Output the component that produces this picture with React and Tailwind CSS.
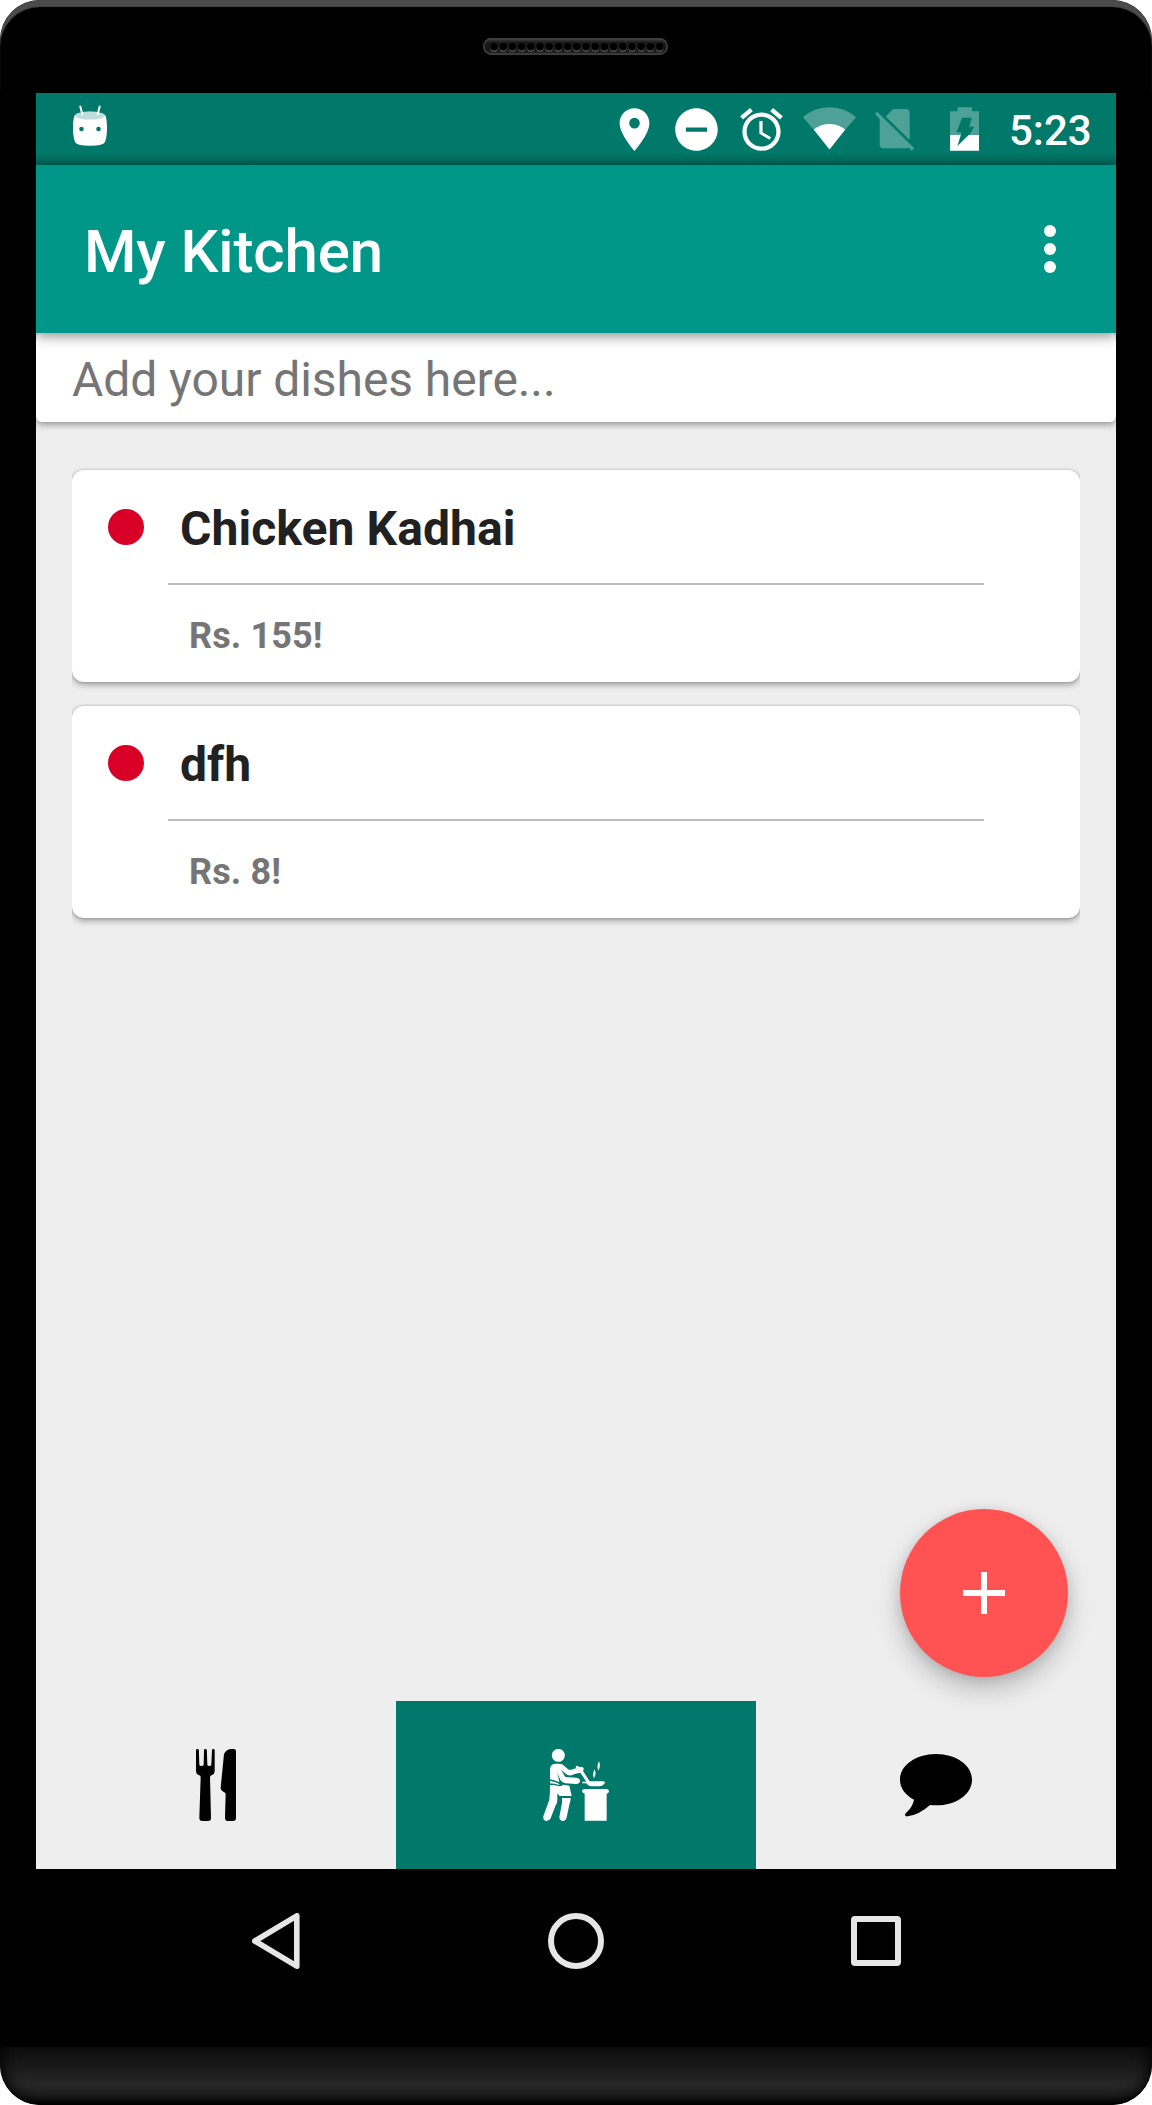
const dishes = [
  { name: "Chicken Kadhai", price: "Rs. 155!" },
  { name: "dfh", price: "Rs. 8!" },
];

function Speaker() {
  return (
    <svg className="mr-px mt-[38px] h-[17px] w-[185px]" viewBox="0 0 185 17">
      <defs>
        <linearGradient id="grille" x1="0" y1="0" x2="0" y2="1">
          <stop offset="0" stopColor="#4c4c4c" />
          <stop offset="0.25" stopColor="#1c1c1c" />
          <stop offset="0.75" stopColor="#161616" />
          <stop offset="1" stopColor="#3a3a3a" />
        </linearGradient>
      </defs>
      <rect width="185" height="17" rx="8.5" fill="url(#grille)" />
      <rect x="0.75" y="0.75" width="183.5" height="15.5" rx="7.75" fill="none" stroke="#404040" strokeWidth="1.5" />
      {Array.from({ length: 19 }, (_, i) => (
        <g key={i}>
          <circle cx={11 + i * 9.2} cy="9.9" r="3.8" fill="#5c5c5c" />
          <circle cx={11 + i * 9.2} cy="8.8" r="3.8" fill="#000" />
        </g>
      ))}
    </svg>
  );
}

function StatusBar() {
  return (
    <div className="flex h-[72px] items-start bg-[linear-gradient(to_bottom,#00796b_82%,#00705f_91%,#006054_100%)] pl-[37px] text-white">
      <svg className="mt-3 h-[42px] w-[34px] shrink-0" viewBox="73 105 34 42">
        <path d="M74.5 115.5 Q90 108 105.5 115.5 Q107 120 107 128 Q107 137 105 142 Q104 145.7 90 145.7 Q76 145.7 75 142 Q73 137 73 128 Q73 120 74.5 115.5Z" fill="#fff" />
        <ellipse cx="90" cy="115.6" rx="15" ry="4" fill="#bfdedb" />
        <path d="M80.3 106.5 L82.4 114.5 M99.7 106.5 L97.6 114.5" stroke="#fff" strokeWidth="2" strokeLinecap="round" />
        <circle cx="81.5" cy="129" r="2.3" fill="#00796b" />
        <circle cx="98.5" cy="129" r="2.3" fill="#00796b" />
      </svg>
      <svg className="ml-[502px] mt-[11px] h-[51px] w-[51px] shrink-0" viewBox="0 0 24 24" fill="currentColor">
        <path d="M12 2C8.13 2 5 5.13 5 9c0 5.25 7 13 7 13s7-7.75 7-13c0-3.87-3.13-7-7-7zm0 9.5a2.5 2.5 0 1 1 0-5 2.5 2.5 0 0 1 0 5z" />
      </svg>
      <svg className="ml-[11px] mt-[11px] h-[51px] w-[51px] shrink-0" viewBox="0 0 24 24" fill="currentColor">
        <path d="M12 2C6.48 2 2 6.48 2 12s4.48 10 10 10 10-4.48 10-10S17.52 2 12 2zm5 11H7v-2h10v2z" />
      </svg>
      <svg className="ml-[14px] mt-[11px] h-[51px] w-[51px] shrink-0" viewBox="0 0 24 24" fill="currentColor">
        <path d="M22 5.72l-4.6-3.86-1.29 1.53 4.6 3.86L22 5.72zM7.88 3.39L6.6 1.86 2 5.71l1.29 1.53 4.59-3.85zM12.5 8H11v6l4.75 2.85.75-1.23-4-2.37V8zM12 4c-4.97 0-9 4.03-9 9s4.02 9 9 9c4.97 0 9-4.03 9-9s-4.03-9-9-9zm0 16c-3.87 0-7-3.13-7-7s3.13-7 7-7 7 3.13 7 7-3.13 7-7 7z" />
      </svg>
      <svg className="ml-4 mt-[14px] h-[43px] w-[53px] shrink-0" viewBox="803 107 53 43">
        <path d="M803 117.2 Q814 107.2 829.5 107.2 Q845 107.2 856 117.2 L845.3 129.6 Q839 124 829.5 124 Q820 124 813.6 129.6Z" fill="#fff" fillOpacity=".3" />
        <path d="M813.6 129.6 Q820 124 829.5 124 Q839 124 845.3 129.6 L829.5 149.6Z" fill="#fff" />
      </svg>
      <svg className="ml-[19px] mt-4 h-[42px] w-[40px] shrink-0" viewBox="875 109 40 42">
        <path d="M885.8 116.8 L891.6 110.4 Q892.8 109.1 894.6 109.1 H906 Q909.7 109.1 909.7 112.8 V140Z" fill="#fff" fillOpacity=".3" />
        <path d="M877.2 111.7 L914.2 148.3 L911.8 150.7 L908.6 147.5 Q907.8 148.2 906 148.2 H883.3 Q879.7 148.2 879.7 144.6 V118.8 L875 114.1Z" fill="#fff" fillOpacity=".3" />
      </svg>
      <svg className="ml-[34px] mt-[14px] h-[44px] w-[31px] shrink-0" viewBox="949 107 31 44">
        <path d="M950 135 V111.3 H957.5 V107.2 H972 V111.3 H979 V135 H969.5 L974.2 126.7 H969.3 L971.8 117.8 H962.1 L956.5 132.2 H961.5 L960.8 135Z" fill="#fff" fillOpacity=".3" />
        <path d="M950 135 H960.8 L957.4 146 L968.8 135 H979 V150.7 H950Z" fill="#fff" />
      </svg>
      <span className="ml-[29px] text-[42px] font-medium leading-[76px]">5:23</span>
    </div>
  );
}

function AppBar() {
  return (
    <header className="relative z-10 flex h-[168px] items-center justify-between bg-[#009688] pl-12 pr-[60px] shadow-[0_3px_12px_rgba(0,0,0,0.45)]">
      <h1 className="pt-[5px] text-[60px] font-medium leading-[72px] tracking-[-0.1px] text-white">My Kitchen</h1>
      <div className="flex flex-col gap-1.5">
        <i className="size-3 rounded-full bg-white" />
        <i className="size-3 rounded-full bg-white" />
        <i className="size-3 rounded-full bg-white" />
      </div>
    </header>
  );
}

function DishCard({ name, price }) {
  return (
    <article className="h-[212px] rounded-xl bg-white shadow-[0_3px_6px_rgba(0,0,0,0.32),0_0_3px_rgba(0,0,0,0.2)]">
      <div className="flex h-[113px] items-start pl-9">
        <i className="mt-[38.5px] size-9 rounded-full bg-[#d80027]" />
        <h2 className="ml-9 mt-[29px] text-[48px] font-bold leading-[60px] tracking-[0.08px] text-[#212121]">{name}</h2>
      </div>
      <div className="mx-24 h-0.5 bg-[#bdbdbd]" />
      <p className="ml-[117px] mt-[31px] text-[36px] font-bold leading-[40px] tracking-[0.12px] text-[#757575]">{price}</p>
    </article>
  );
}

function CutleryIcon() {
  return (
    <svg className="size-[72px]" viewBox="60 87 216 216" fill="#000">
      <path d="M108 90 Q108 87 112 87 Q116 87 116.500 90 L118 134 Q119 138 124 138 Q130 138 131 134 L132 90 Q132 87 136 87 Q140 87 140.500 90 L142 134 Q143 138 148 138 Q153 138 154 134 L156 90 Q156 87 160 87 Q164 87 164 90 V154 Q164 162 156 165 Q150 167 150 171 L153 294 Q153 303 144 303 H127 Q118 303 118 294 L122 171 Q122 167 116 165 Q108 162 108 154Z" />
      <path d="M228 93 Q228 87 221 87 H212 Q199 88 192 102 L182 203 Q181 212 190 215 Q197 217 197 222 L195 293 Q195 303 205 303 H219 Q228 303 228 294Z" />
    </svg>
  );
}

function CookIcon() {
  return (
    <svg className="size-[72px]" viewBox="90 87 216 216" fill="#fff">
      <circle cx="145" cy="106" r="19.500" />
      <path d="M120 178 V148 Q121 132 136 131 H147 Q158 131 163 138 L174 148 Q181 151 188 148 L198 145 L197 140 Q201 134 206 140 L219 142 Q223 148 219 153 L239 184 H276 Q285 184 285 187 Q281 198 269 199 H242 Q234 198 229 190 H217 V185 H229 L211 158 Q205 160 197 161 L184 166 Q175 168 167 161 L154 149 Q160 163 166 171 L199 173 Q210 174 210 183 Q209 192 198 192 L166 190 Q157 189 151 180 L142 158 L147 181 L148 187 Q136 181 120 178Z" />
      <path d="M120 183 Q135 184 148 192 V195 Q134 190 120 190Z" />
      <path d="M120 195 Q135 195 148 199 Q155 199 159 194 L178 197 L185 228 H149 L142 220 V239 Q142 248 137 256 L122 295 Q118 303 109 303 Q98 301 100 289 L118 239 Q120 220 120 195Z" />
      <path d="M156 234 H182 Q182 242 179 250 L170 292 Q168 303 158 303 Q148 302 148 291 L156 249Z" />
      <path d="M223 207 H290 Q297 208 297 214 Q296 221 290 221 V302 H224 V221 Q217 220 216 214 Q217 208 223 207Z" />
      <path d="M254 148 Q260 162 252 175 Q246 162 254 148Z M267 124 Q273 139 265 152 Q259 139 267 124Z" />
    </svg>
  );
}

function ChatIcon() {
  return (
    <svg className="size-[72px]" viewBox="90 87 216 216" fill="#000">
      <path d="M198 102 C258 102 306 136 306 179 C306 223 258 256 198 256 Q190 256 180 255 Q148 284 113 289 Q105 290 105 284 Q106 280 111 276 Q128 260 132 239 C106 225 90 204 90 179 C90 136 138 102 198 102Z" />
    </svg>
  );
}

function BottomTabs() {
  return (
    <nav className="grid h-[168px] grid-cols-3">
      <div className="flex items-center justify-center"><CutleryIcon /></div>
      <div className="flex items-center justify-center bg-[#00796b]"><CookIcon /></div>
      <div className="flex items-center justify-center"><ChatIcon /></div>
    </nav>
  );
}

function SystemNav() {
  return (
    <div className="mx-9 flex h-[144px] items-center justify-center bg-black">
      <svg className="h-14 w-12" viewBox="0 0 48 56" fill="none" stroke="#e6e6e6" strokeWidth="5.600" strokeLinejoin="round">
        <path d="M44.800 2.800 V53.200 L2.800 28Z" />
      </svg>
      <div className="ml-[248px] size-14 rounded-full border-[6px] border-[#e6e6e6]" />
      <div className="ml-[247px] size-[50px] rounded-[4px] border-[6px] border-[#e6e6e6]" />
    </div>
  );
}

export default function App() {
  return (
    <div className="h-[2105px] w-[1152px] bg-white font-['Roboto',sans-serif]">
      <div className="flex h-full flex-col overflow-hidden rounded-[40px] bg-black">
        <div className="flex h-[93px] shrink-0 justify-center rounded-t-[40px] shadow-[inset_0_7px_1px_0_#4b4b4b]">
          <Speaker />
        </div>
        <main className="relative mx-9 flex h-[1776px] shrink-0 flex-col overflow-hidden bg-[#eeeeee]">
          <StatusBar />
          <AppBar />
          <div className="h-[89px] rounded-md bg-white pl-9 text-[48px] leading-[93px] tracking-[-0.06px] text-[#757575] shadow-[0_3px_6px_rgba(0,0,0,0.35)]">
            Add your dishes here...
          </div>
          <section className="mx-9 mt-12 flex flex-1 flex-col gap-6 overflow-x-clip">
            {dishes.map((dish) => (
              <DishCard key={dish.name} {...dish} />
            ))}
          </section>
          <button className="absolute bottom-[192px] right-12 flex size-[168px] items-center justify-center rounded-full bg-[#ff5252] shadow-[0_12px_26px_rgba(0,0,0,0.22),0_2px_12px_rgba(0,0,0,0.1)]" aria-label="Add dish">
            <svg className="size-[42px]" viewBox="0 0 42 42" fill="#fff">
              <path d="M18 0h6v18h18v6H24v18h-6V24H0v-6h18z" />
            </svg>
          </button>
          <BottomTabs />
        </main>
        <SystemNav />
        <div className="mt-[34px] h-[58px] shrink-0 overflow-hidden rounded-b-[40px] bg-[linear-gradient(to_bottom,#0c0c0c,#272727_65%,#222_80%,#141414_92%,#000_100%)]">
          <div className="-mt-10 h-[98px] rounded-b-[40px] shadow-[inset_0_0_16px_2px_#000]" />
        </div>
      </div>
    </div>
  );
}
